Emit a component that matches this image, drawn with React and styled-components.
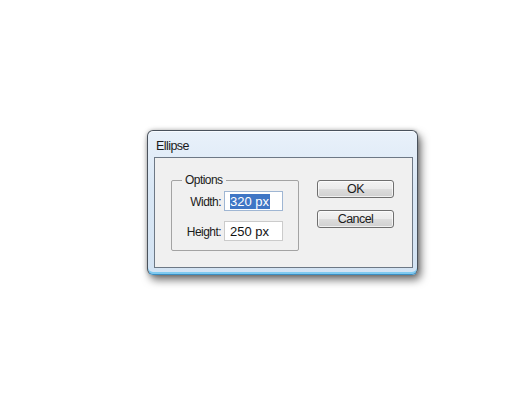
import styled, { createGlobalStyle } from 'styled-components';

const GlobalStyle = createGlobalStyle`
	body {
		margin: 0;
		background: #ffffff;
	}
`;

const Page = styled.div`
	width: 530px;
	height: 400px;
	box-sizing: border-box;
	padding: 130px 0 0 147px;
`;

const Window = styled.div`
	width: 271px;
	height: 145px;
	box-sizing: border-box;
	display: flex;
	flex-direction: column;
	padding: 0 4px 6px 6px;
	border: 1px solid #4a525c;
	border-bottom-color: #3a8fc4;
	border-radius: 6px;
	background: linear-gradient(180deg, #e9f1fa 0%, #d9e7f5 40%, #d3e3f3 100%);
	box-shadow:
		inset 0 1px 0 #f8fbff,
		inset 0 -2px 0 #7fcaf0,
		3px 5px 9px rgba(0, 0, 0, 0.55),
		0 0 4px rgba(0, 0, 0, 0.25);
	font-family: 'Liberation Sans', Arial, sans-serif;
	font-size: 12px;
	letter-spacing: -0.55px;
	color: #1b1b1b;
`;

const TitleBar = styled.div`
	height: 26px;
	display: flex;
	align-items: center;
	padding: 3px 0 0 2px;
	box-sizing: border-box;
	font-size: 12.5px;
`;

const Panel = styled.div`
	height: 111px;
	box-sizing: border-box;
	display: flex;
	align-items: flex-start;
	gap: 18px;
	padding: 15px 0 0 16px;
	border: 1px solid #6d7885;
	background: #f0f0f0;
`;

const GroupBox = styled.fieldset`
	margin: 0;
	width: 128px;
	box-sizing: border-box;
	padding: 3px 15px 9px 0;
	border: 1px solid #a3a3a3;
	border-radius: 2px;
	display: grid;
	grid-template-columns: auto 59px;
	justify-content: end;
	column-gap: 3px;
	row-gap: 10px;
`;

const Legend = styled.legend`
	margin-left: 10px;
	padding: 0 3px;
	line-height: 15px;
`;

const Label = styled.span`
	justify-self: end;
	align-self: center;
	padding-top: 2px;
`;

const TextBox = styled.div`
	height: 20px;
	box-sizing: border-box;
	display: flex;
	align-items: center;
	padding-left: 5px;
	background: #ffffff;
	border: 1px solid ${(p) => (p.$focused ? '#9fb6d3' : '#cbcbcb')};
	font-size: 13px;
	letter-spacing: 0;
	color: #111111;
`;

const Selected = styled.span`
	background: #3f76c5;
	color: #ffffff;
	line-height: 15px;
	padding-right: 1px;
`;

const Buttons = styled.div`
	display: flex;
	flex-direction: column;
	gap: 12px;
	margin-top: 7px;
`;

const Button = styled.button`
	width: 77px;
	height: 18px;
	box-sizing: border-box;
	padding: 0;
	border: 1px solid #6f6f6f;
	border-radius: 3px;
	background: linear-gradient(180deg, #f3f3f3 0%, #ebebeb 48%, #dddddd 52%, #d0d0d0 100%);
	box-shadow: inset 0 0 0 1px rgba(255, 255, 255, 0.7);
	font-family: 'Liberation Sans', Arial, sans-serif;
	font-size: 12.5px;
	letter-spacing: -0.55px;
	line-height: 14px;
	color: #1b1b1b;
`;

const App = () => {
	return (
		<>
			<GlobalStyle />
			<Page>
				<Window>
					<TitleBar>Ellipse</TitleBar>
					<Panel>
						<GroupBox>
							<Legend>Options</Legend>
							<Label>Width:</Label>
							<TextBox $focused>
								<Selected>320 px</Selected>
							</TextBox>
							<Label>Height:</Label>
							<TextBox>250 px</TextBox>
						</GroupBox>
						<Buttons>
							<Button>OK</Button>
							<Button>Cancel</Button>
						</Buttons>
					</Panel>
				</Window>
			</Page>
		</>
	);
};

export default App;
